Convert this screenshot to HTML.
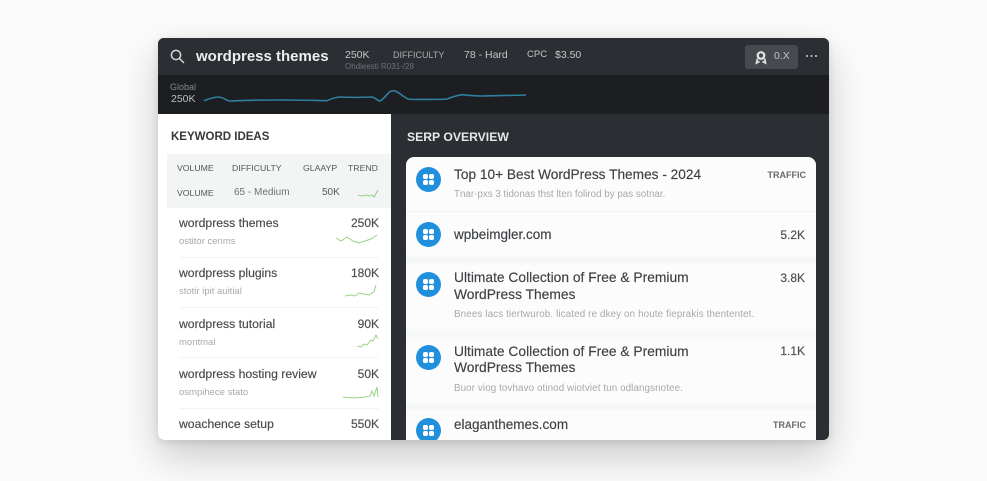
<!DOCTYPE html>
<html>
<head>
<meta charset="utf-8">
<style>
html,body{margin:0;padding:0;width:987px;height:481px;overflow:hidden;background:#fbfbfb;font-family:"Liberation Sans",sans-serif}
.a{position:absolute;white-space:nowrap;line-height:16px}
#app{position:absolute;left:158px;top:38px;width:671px;height:402px;border-radius:6px;overflow:hidden;background:#2b2e33;box-shadow:0 16px 40px rgba(0,0,0,.2),0 2px 8px rgba(0,0,0,.1)}
#bg{position:absolute;left:0;top:0;width:987px;height:481px;filter:blur(.35px)}
.p{position:absolute}
.k{color:#46484b;font-size:12.2px;-webkit-text-stroke:.15px #46484b}
.v{color:#4a4c4f;font-size:12px;text-align:right;-webkit-text-stroke:.15px #4a4c4f}
.h{color:#53565a;font-size:8.7px}
.t{color:#3e4144;font-size:13.8px;-webkit-text-stroke:.15px #3e4144}
.s{color:#a6a8ab;font-size:9.5px}
.r{font-size:9.8px}
.i{position:absolute;left:416px;width:25px;height:25px;border-radius:50%;background:#2190dc}
.i:before{content:"";position:absolute;left:7px;top:7px;width:11px;height:11px;background:
radial-gradient(circle at center,#fff 2.4px,rgba(255,255,255,0) 3.2px) 0 0/5px 5px no-repeat,
radial-gradient(circle at center,#fff 2.4px,rgba(255,255,255,0) 3.2px) 100% 0/5px 5px no-repeat,
radial-gradient(circle at center,#fff 2.4px,rgba(255,255,255,0) 3.2px) 0 100%/5px 5px no-repeat,
radial-gradient(circle at center,#fff 2.4px,rgba(255,255,255,0) 3.2px) 100% 100%/5px 5px no-repeat}
.sep{position:absolute;height:1px;background:#f3f4f5}
.band{position:absolute;left:406px;width:410px;background:linear-gradient(#fcfcfd,#f4f5f6 50%,#fcfcfd)}
.tr{right:181px;font-size:9px;font-weight:bold;color:#66696c}
</style>
</head>
<body>
<div id="app"></div>
<div id="bg">
<!-- top bar -->
<div class="p" style="left:158px;top:38px;width:671px;height:37px;background:#2b2e33;border-radius:6px 6px 0 0"></div>
<div class="p" style="left:158px;top:75px;width:671px;height:39px;background:#1c1e21"></div>
<svg class="p" style="left:169px;top:48px" width="17" height="17" viewBox="0 0 17 17" fill="none" stroke="#d4d5d6" stroke-width="1.5"><circle cx="7" cy="7" r="4.6"/><path d="M10.4 10.4L15 15"/></svg>
<div class="a" style="left:196px;top:49px;color:#eceded;font-size:15px;font-weight:bold">wordpress themes</div>
<div class="a" style="left:345px;top:47px;color:#c4c5c6;font-size:10.5px">250K</div>
<div class="a" style="left:393px;top:47px;color:#a9abad;font-size:9px">DIFFICULTY</div>
<div class="a" style="left:464px;top:47px;color:#c4c5c6;font-size:10.5px">78 - Hard</div>
<div class="a" style="left:527px;top:47px;color:#c4c5c6;font-size:9.5px">CPC</div>
<div class="a" style="left:555px;top:47px;color:#c4c5c6;font-size:10.5px">$3.50</div>
<div class="a" style="left:345px;top:59px;color:#6e7174;font-size:8px">Ohdieesti R031-/28</div>
<div class="p" style="left:745px;top:45px;width:53px;height:24px;background:#46494d;border-radius:3px"></div>
<svg class="p" style="left:754px;top:50px" width="14" height="15" viewBox="0 0 14 15" fill="none"><circle cx="7" cy="5.500" r="3.300" stroke="#e3e4e4" stroke-width="2.200"/><path d="M3.500 8.500L2.500 13L5.500 11.500M10.500 8.500L11.500 13L8.500 11.500" stroke="#e3e4e4" stroke-width="1.700"/></svg>
<div class="a" style="left:774px;top:48px;color:#c4c5c6;font-size:10.5px">0.X</div>
<div class="p" style="left:806px;top:55px;width:2.200px;height:2.200px;border-radius:50%;background:#d0d1d2;box-shadow:4.500px 0 0 #d0d1d2,9px 0 0 #d0d1d2"></div>
<!-- chart strip -->
<div class="a" style="left:170px;top:79px;color:#85888b;font-size:9px">Global</div>
<div class="a" style="left:171px;top:91px;color:#bdbec0;font-size:10.5px">250K</div>
<svg class="p" style="left:200px;top:85px" width="330" height="24" viewBox="0 0 330 24" fill="none"><path d="M4 15.700C10 13.500 14 12 18 12C23 12 26 15.500 30 16C45 15 60 15 80 15C100 15 115 15.500 127 15.700C132 13.500 136 12 140 12C150 12.500 160 12.500 172 12C176 13 178 16 180 16C185 14 188 5.700 193 5.700C199 5.700 204 14 210 14.300C225 14.500 240 14.500 247 14C252 12 257 10 263 9.700C270 10.500 277 11 283 11C295 10.500 310 10.500 326 10" stroke="#2f7f9f" stroke-width="1.600"/></svg>
<!-- left panel -->
<div class="p" style="left:158px;top:114px;width:233px;height:326px;background:#fff;border-radius:0 0 0 6px"></div>
<div class="a" style="left:171px;top:129px;color:#36383b;font-size:11.5px;font-weight:bold">KEYWORD IDEAS</div>
<div class="p" style="left:167px;top:154px;width:224px;height:54px;background:#f3f4f4"></div>
<div class="a h" style="left:177px;top:160px">VOLUME</div>
<div class="a h" style="left:232px;top:160px">DIFFICULTY</div>
<div class="a h" style="left:303px;top:160px">GLAAYP</div>
<div class="a h" style="left:348px;top:160px">TREND</div>
<div class="a h" style="left:177px;top:185px">VOLUME</div>
<div class="a" style="left:234px;top:185px;color:#6f7174;font-size:10px">65 - Medium</div>
<div class="a" style="left:322px;top:185px;color:#56585b;font-size:10px">50K</div>
<svg class="p" style="left:356px;top:186px" width="24" height="14" fill="none" stroke="#8dc87a" stroke-width=".9"><path d="M2 9L6 10L10 9L13 10L16 9L18 11L22 4"/></svg>

<div class="a k" style="left:179px;top:215px">wordpress themes</div>
<div class="a v" style="right:608px;top:215px">250K</div>
<div class="a s" style="left:179px;top:234px">ostitor cenms</div>
<svg class="p" style="left:335px;top:231px" width="44" height="16" fill="none" stroke="#9bd285" stroke-width="1"><path d="M1 7L6 10L12 6L18 10L24 12L30 10L36 8L42 4"/></svg>
<div class="sep" style="left:179px;top:257px;width:200px"></div>

<div class="a k" style="left:179px;top:265px">wordpress plugins</div>
<div class="a v" style="right:608px;top:265px">180K</div>
<div class="a s" style="left:179px;top:284px">stotir ipit auitial</div>
<svg class="p" style="left:343px;top:283px" width="36" height="17" fill="none" stroke="#9bd285" stroke-width="1"><path d="M2 13L8 12L12 13L16 10L21 11L26 12L29 10L31 9L33 2"/></svg>
<div class="sep" style="left:179px;top:307px;width:200px"></div>

<div class="a k" style="left:179px;top:316px">wordpress tutorial</div>
<div class="a v" style="right:608px;top:316px">90K</div>
<div class="a s" style="left:179px;top:335px">montmal</div>
<svg class="p" style="left:355px;top:333px" width="24" height="17" fill="none" stroke="#9bd285" stroke-width="1"><path d="M2 13L6 14L9 11L12 12L16 7L18 8L21 2L23 6"/></svg>
<div class="sep" style="left:179px;top:357px;width:200px"></div>

<div class="a k" style="left:179px;top:366px">wordpress hosting review</div>
<div class="a v" style="right:608px;top:366px">50K</div>
<div class="a s" style="left:179px;top:385px">osmpihece stato</div>
<svg class="p" style="left:342px;top:384px" width="38" height="18" fill="none" stroke="#9bd285" stroke-width="1"><path d="M1 13L12 14L24 13L28 12L30 7L32 12L35 3L36 13"/></svg>
<div class="sep" style="left:179px;top:408px;width:200px"></div>

<div class="a k" style="left:179px;top:416px">woachence setup</div>
<div class="a v" style="right:608px;top:416px">550K</div>

<!-- right panel -->
<div class="a" style="left:407px;top:129px;color:#e6e7e7;font-size:12.2px;font-weight:bold">SERP OVERVIEW</div>
<div class="p" style="left:406px;top:157px;width:410px;height:283px;background:#fcfcfd;border-radius:8px 8px 0 0"></div>
<div class="sep" style="left:406px;top:211px;width:410px"></div>
<div class="band" style="top:254px;height:12px"></div>
<div class="band" style="top:328px;height:12px"></div>
<div class="band" style="top:402px;height:10px"></div>

<div class="i" style="top:167px"></div>
<div class="a t" style="left:454px;top:167px;font-size:13.7px">Top 10+ Best WordPress Themes - 2024</div>
<div class="a tr" style="top:167px">TRAFFIC</div>
<div class="a s r" style="left:454px;top:187px">Tnar-pxs 3 tidonas thst lten folirod by pas sotnar.</div>

<div class="i" style="top:222px"></div>
<div class="a t" style="left:454px;top:227px;font-size:13.5px">wpbeimgler.com</div>
<div class="a v" style="right:182px;top:227px">5.2K</div>

<div class="i" style="top:272px"></div>
<div class="a t" style="left:454px;top:270px">Ultimate Collection of Free &amp; Premium</div>
<div class="a t" style="left:454px;top:287px">WordPress Themes</div>
<div class="a v" style="right:182px;top:270px">3.8K</div>
<div class="a s r" style="left:454px;top:307px;letter-spacing:.13px">Bnees lacs tiertwurob. licated re dkey on houte fieprakis thententet.</div>

<div class="i" style="top:345px"></div>
<div class="a t" style="left:454px;top:344px">Ultimate Collection of Free &amp; Premium</div>
<div class="a t" style="left:454px;top:360px">WordPress Themes</div>
<div class="a v" style="right:182px;top:343px">1.1K</div>
<div class="a s r" style="left:454px;top:381px;letter-spacing:.1px">Buor viog tovhavo otinod wiotviet tun odlangsnotee.</div>

<div class="p" style="left:406px;top:412px;width:410px;height:28px;overflow:hidden"><div class="i" style="left:10px;top:6px"></div></div>
<div class="a t" style="left:454px;top:417px;font-size:13.5px">elaganthemes.com</div>
<div class="a tr" style="top:417px">TRAFIC</div>
</div>
</body>
</html>
